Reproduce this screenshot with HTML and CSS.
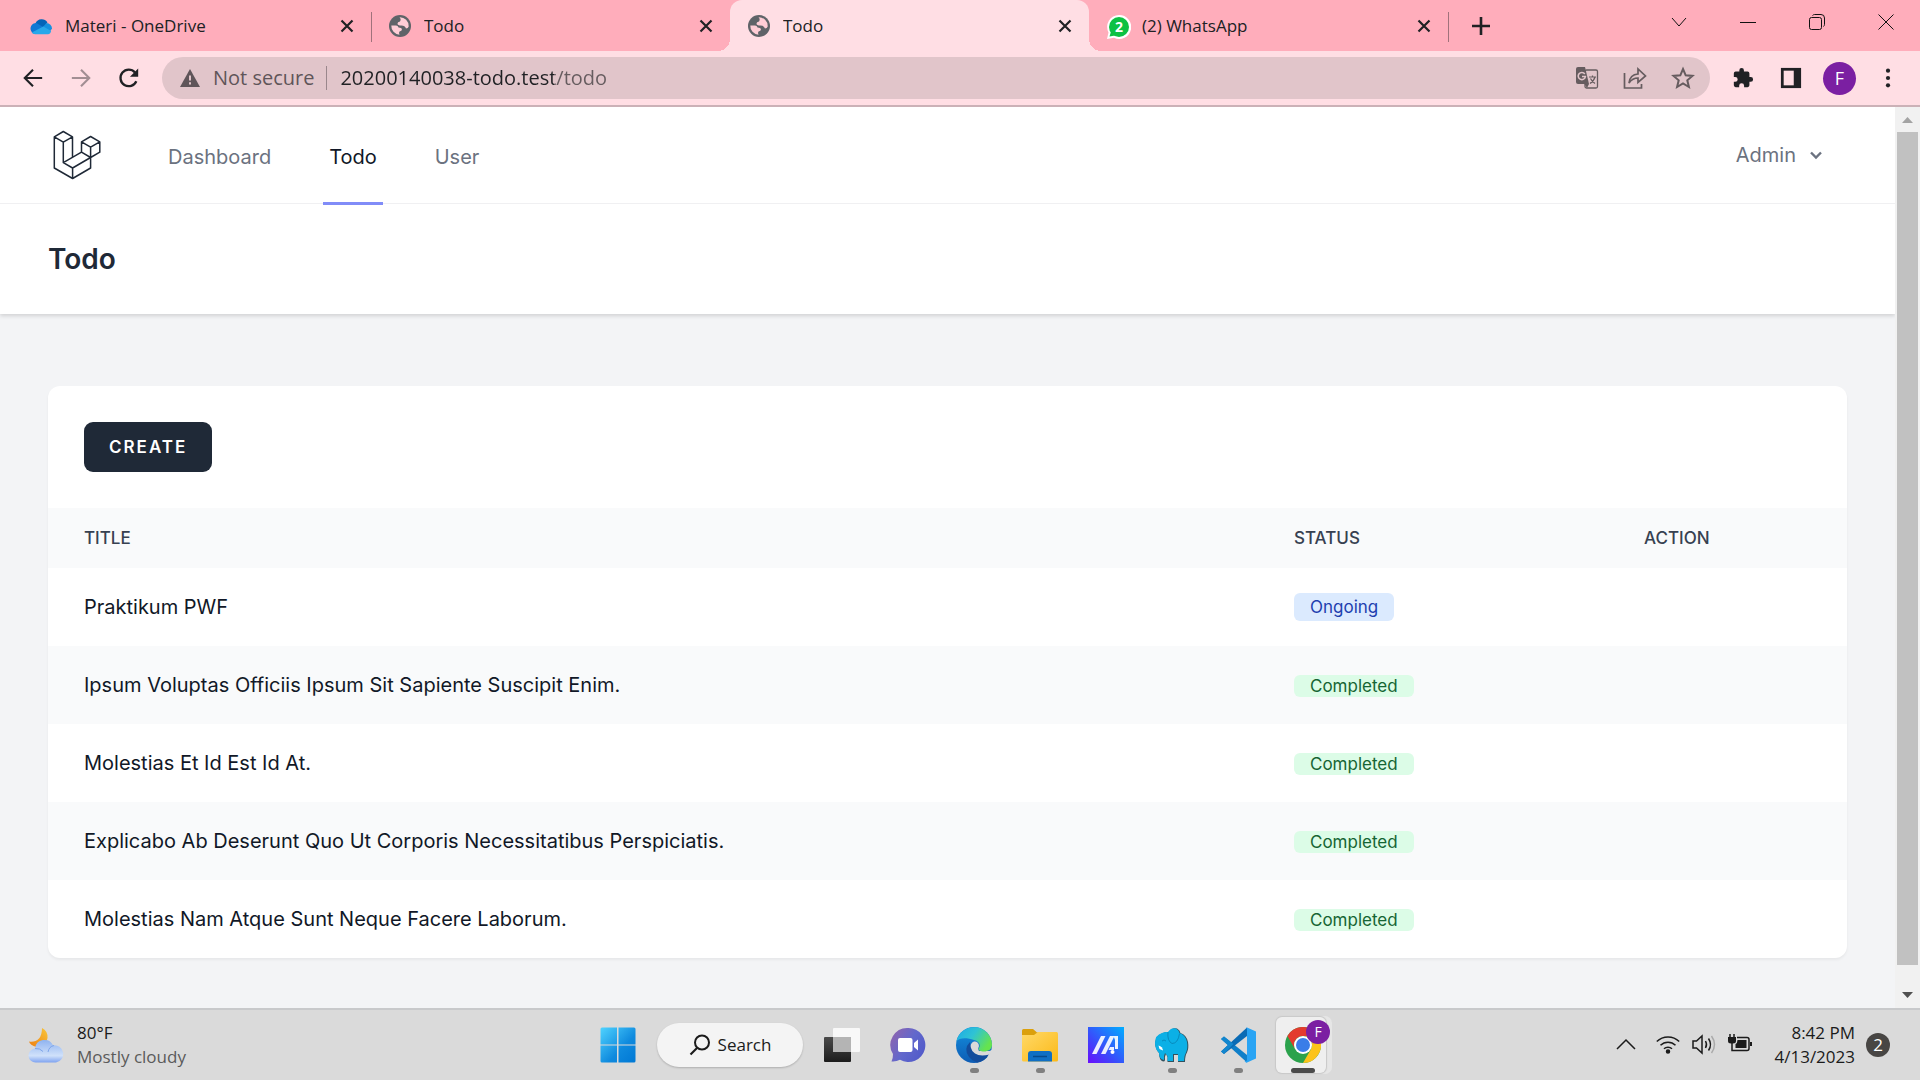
FILE: index.html
```html
<!DOCTYPE html>
<html lang="en">
<head>
<meta charset="utf-8">
<meta name="viewport" content="width=device-width, initial-scale=1">
<title>Todo</title>
<link rel="stylesheet" href="styles.css">
</head>
<body>
<svg class="defs" width="0" height="0" aria-hidden="true">
  <symbol id="globe" viewBox="0 0 22 22">
    <circle cx="11" cy="11" r="11" fill="#5f6368"/>
    <path d="M10.500 2.300A8.800 8.800 0 0 1 19.700 11.500Q19 13.500 17 13.500 16 10.500 12.500 10.500 8.500 10.500 8.500 8.500 8.500 7 11 6.500 12.500 4 10.500 2.300z" fill="#ffcdd6"/>
    <path d="M2.300 10.500H7Q9 10.500 9.500 12.500 12.500 12.500 13 14 13 16 10.500 16.500 9.500 18 10.500 19.700A8.800 8.800 0 0 1 2.300 10.500z" fill="#ffcdd6"/>
  </symbol>
  <symbol id="cross" viewBox="0 0 14 14"><path d="M1.500 1.500l11 11M12.500 1.500l-11 11" stroke="#202124" stroke-width="2.200"/></symbol>
</svg>

<header class="browser">
  <div class="tabstrip">
    <div class="tab">
      <svg class="favicon" viewBox="0 0 24 24"><path d="M6 9a7.500 7.500 0 0 1 13-1l-5 8-9-4z" fill="#0364b8"/><path d="M1 17a6 6 0 0 1 6-8.200l10 6-8 6H5a5 5 0 0 1-4-3.800z" fill="#0f78d4"/><path d="M14 13l4-4.200a6 6 0 0 1 6 6l-2 3z" fill="#1490df"/><path d="M2 19l12.500-6.500L23 17.500a4 4 0 0 1-3.500 3.500H5.500A5 5 0 0 1 2 19z" fill="#28a8ea"/></svg>
      <span class="tab-title">Materi - OneDrive</span>
      <button class="tab-close" aria-label="Close tab"><svg viewBox="0 0 14 14"><use href="#cross"/></svg></button>
    </div>
    <div class="tab divided">
      <svg class="favicon"><use href="#globe"/></svg>
      <span class="tab-title">Todo</span>
      <button class="tab-close" aria-label="Close tab"><svg viewBox="0 0 14 14"><use href="#cross"/></svg></button>
    </div>
    <div class="tab active">
      <svg class="favicon"><use href="#globe"/></svg>
      <span class="tab-title">Todo</span>
      <button class="tab-close" aria-label="Close tab"><svg viewBox="0 0 14 14"><use href="#cross"/></svg></button>
    </div>
    <div class="tab">
      <span class="favicon whatsapp"><svg viewBox="0 0 24 24"><path d="M12 0a12 12 0 1 1-5 22.800L0 24l1.500-6.500A12 12 0 0 1 12 0z" fill="#fff"/><circle cx="12" cy="12" r="10" fill="#0dc143"/><path d="M2.500 21.500l1.500-5 4 4z" fill="#0dc143"/></svg><b>2</b></span>
      <span class="tab-title">(2) WhatsApp</span>
      <button class="tab-close" aria-label="Close tab"><svg viewBox="0 0 14 14"><use href="#cross"/></svg></button>
    </div>
    <button class="new-tab divided" aria-label="New tab"><svg width="18" height="18" viewBox="0 0 18 18"><path d="M9 0v18M0 9h18" stroke="#202124" stroke-width="2.600"/></svg></button>
    <div class="window-controls">
      <button aria-label="Search tabs"><svg viewBox="0 0 16 16"><path d="M1 4l7 8 7-8"/></svg></button>
      <button aria-label="Minimize"><svg viewBox="0 0 16 16"><path d="M0 8.500h16"/></svg></button>
      <button aria-label="Restore"><svg viewBox="0 0 16 16"><rect x=".5" y="3.500" width="12" height="12" rx="2"/><path d="M3.500 1.500q1-1 2-1H12a3.500 3.500 0 0 1 3.500 3.500v6.500q0 1-1 2"/></svg></button>
      <button aria-label="Close"><svg viewBox="0 0 16 16"><path d="M.5.5l15 15M15.500.5l-15 15"/></svg></button>
    </div>
  </div>

  <div class="toolbar">
    <button class="tool" aria-label="Back"><svg viewBox="0 0 24 24" fill="none" stroke="#202124" stroke-width="2.300"><path d="M22 12H3.500M12 3l-9 9 9 9"/></svg></button>
    <button class="tool" aria-label="Forward"><svg viewBox="0 0 24 24" fill="none" stroke="#a28e93" stroke-width="2.300"><path d="M2 12h18.500M12 3l9 9-9 9"/></svg></button>
    <button class="tool" aria-label="Reload"><svg viewBox="0 0 24 24" fill="none" stroke="#202124" stroke-width="2.500"><path d="M20 15.500A9 9 0 1 1 18.500 6"/><path d="M22 1.500v9h-9z" fill="#202124" stroke="none"/></svg></button>
    <div class="omnibox">
      <svg class="warning" viewBox="0 0 20 18"><path d="M10 0l10 18H0z" fill="#5f5559"/><path d="M10 6.500v5M10 13.300v2.200" stroke="#e1c5ca" stroke-width="2"/></svg>
      <label class="security" for="address">Not secure</label>
      <input id="address" class="address" type="text" value="20200140038-todo.test/todo">
      <button class="omni-tool" aria-label="Translate"><svg viewBox="0 0 24 24"><rect x="10" y="4" width="12.500" height="18" rx="1.500" fill="none" stroke="#665c5f" stroke-width="1.300"/><path d="M3 1h7l4 17H3a2 2 0 0 1-2-2V3a2 2 0 0 1 2-2z" fill="#665c5f"/><path d="M9.500 18h4.500l-2 4z" fill="#665c5f"/><path d="M9.800 8A3.600 3.600 0 1 0 10.400 10.500H7" fill="none" stroke="#e1c5ca" stroke-width="1.600"/><path d="M14 11h7M17.500 9.500V11M20 11q-1 4-5 6.500M15.500 12.500q1.500 3 4.500 5" fill="none" stroke="#665c5f" stroke-width="1.200"/></svg></button>
      <button class="omni-tool" aria-label="Share"><svg viewBox="0 0 24 24" fill="none" stroke="#665c5f" stroke-width="1.700"><path d="M1.500 7v15h17v-4"/><path d="M6 17q1-8.500 9-9V3l7.500 7-7.500 6.500V12q-5.500 0-9 5z"/></svg></button>
      <button class="omni-tool" aria-label="Bookmark this tab"><svg viewBox="0 0 24 24" fill="none" stroke="#665c5f" stroke-width="2"><path d="M12 3l2.700 6.300 6.800.6-5.200 4.400 1.600 6.700L12 17.400 6.100 21l1.600-6.700L2.500 9.900l6.800-.6z"/></svg></button>
    </div>
    <button class="tool" aria-label="Extensions"><svg viewBox="0 0 24 24" fill="#202124"><path d="M20.500 11H19V7a2 2 0 0 0-2-2h-4V3.500a2.500 2.500 0 0 0-5 0V5H4a2 2 0 0 0-2 2v3.800h1.500a2.700 2.700 0 0 1 0 5.400H2V20a2 2 0 0 0 2 2h3.800v-1.500a2.700 2.700 0 0 1 5.400 0V22H17a2 2 0 0 0 2-2v-4h1.500a2.500 2.500 0 0 0 0-5z"/></svg></button>
    <button class="tool" aria-label="Side panel"><svg viewBox="0 0 24 24"><path d="M1 1h22v22H1z" fill="#202124"/><path d="M4 4h11v16H4z" fill="#ffdee4"/></svg></button>
    <button class="tool profile" aria-label="Profile">F</button>
    <button class="tool" aria-label="Menu"><svg viewBox="0 0 24 24" fill="#202124"><circle cx="12" cy="4" r="2.300"/><circle cx="12" cy="12" r="2.300"/><circle cx="12" cy="20" r="2.300"/></svg></button>
  </div>
</header>

<div class="viewport">
  <div class="app">
    <nav class="nav">
      <a class="logo" href="#" aria-label="Home"><svg width="48" height="50" viewBox="0 0 48 50" fill="none" stroke="#1f2937" stroke-width="1.500" stroke-linejoin="round"><path d="M10.300 1.500l9.200 5.300-9.200 5.300-9-5.300zM1.300 6.800V38l18.300 10.500L37.600 38V27.500M10.300 12.100v20.500l9.300 5.400v10.500M19.600 38l18-10.500M10.300 32.600l18.200-10.500 9.100 5.400M19.500 6.800v20.500M37.600 6.500l9.200 5.300-9.200 5.300-9.100-5.300zM28.500 11.800v10.300M37.600 17.100v10.400l9.200-5.300V11.800"/></svg></a>
      <a class="nav-link" href="#">Dashboard</a>
      <a class="nav-link current" href="#">Todo</a>
      <a class="nav-link" href="#">User</a>
      <button class="user-menu">Admin <svg width="14" height="9" viewBox="0 0 14 9"><path d="M2 1.500l5 5 5-5" fill="none" stroke="#6b7280" stroke-width="2.400"/></svg></button>
    </nav>
    <header class="page-header"><h1>Todo</h1></header>
    <main class="content">
      <section class="card">
        <div class="card-top"><button class="create">CREATE</button></div>
        <table class="todos">
          <thead><tr><th class="col-title">TITLE</th><th class="col-status">STATUS</th><th class="col-action">ACTION</th></tr></thead>
          <tbody>
            <tr><td>Praktikum PWF</td><td><span class="badge ongoing">Ongoing</span></td><td></td></tr>
            <tr><td>Ipsum Voluptas Officiis Ipsum Sit Sapiente Suscipit Enim.</td><td><span class="badge completed">Completed</span></td><td></td></tr>
            <tr><td>Molestias Et Id Est Id At.</td><td><span class="badge completed">Completed</span></td><td></td></tr>
            <tr><td>Explicabo Ab Deserunt Quo Ut Corporis Necessitatibus Perspiciatis.</td><td><span class="badge completed">Completed</span></td><td></td></tr>
            <tr><td>Molestias Nam Atque Sunt Neque Facere Laborum.</td><td><span class="badge completed">Completed</span></td><td></td></tr>
          </tbody>
        </table>
      </section>
    </main>
  </div>
  <div class="scrollbar" aria-hidden="true">
    <svg width="11" height="6" viewBox="0 0 11 6"><path d="M0 6l5.500-6L11 6z" fill="#a3a3a3"/></svg>
    <div class="thumb"></div>
    <svg width="11" height="6" viewBox="0 0 11 6"><path d="M0 0l5.500 6L11 0z" fill="#505050"/></svg>
  </div>
</div>

<footer class="taskbar">
  <div class="weather">
    <svg width="36" height="36" viewBox="0 0 36 36">
      <defs><linearGradient id="moon" x1="1" y1="0" x2="0" y2="1"><stop offset="0" stop-color="#f8c63a"/><stop offset="1" stop-color="#ee7f12"/></linearGradient>
      <linearGradient id="cloud" x1="0" y1="0" x2="0" y2="1"><stop offset="0" stop-color="#8fb3f0"/><stop offset=".7" stop-color="#d0e1fa"/><stop offset="1" stop-color="#7fa3f0"/></linearGradient></defs>
      <path d="M14 1q6 3 5.500 10-1 8-11 9Q2 18 1 14.500q6 1 10-3Q14 8 14 1z" fill="url(#moon)"/>
      <path d="M8 35.500a7 7 0 0 1-1-14 9.500 9.500 0 0 1 18-3.200 8.600 8.600 0 0 1 3 17.200z" fill="url(#cloud)"/>
      <path d="M15 24.500q-3-3.500-8-3M20 25q1-5.500 6-6.500" stroke="#7ea5ea" fill="none"/>
    </svg>
    <p><span>80°F</span><span class="muted">Mostly cloudy</span></p>
  </div>

  <div class="apps">
    <button class="app-btn" aria-label="Start"><svg viewBox="0 0 36 36"><defs><linearGradient id="win" x1="0" y1="0" x2="1" y2="1"><stop offset="0" stop-color="#4fd3ff"/><stop offset=".6" stop-color="#0f8ade"/><stop offset="1" stop-color="#0078d4"/></linearGradient></defs><path d="M2 .5h15v17H.5V2A1.500 1.500 0 0 1 2 .5zM18.500.5H34A1.500 1.500 0 0 1 35.500 2v15.500h-17zM.5 18.500H17v17H2A1.500 1.500 0 0 1 .5 34zM18.500 18.500h17V34a1.500 1.500 0 0 1-1.500 1.500H18.500z" fill="url(#win)"/></svg></button>
    <button class="search"><svg width="22" height="22" viewBox="0 0 22 22"><circle cx="13" cy="8.500" r="7" fill="none" stroke="#1b1b1b" stroke-width="2"/><path d="M8 14l-6.500 6.500" stroke="#1b1b1b" stroke-width="2.200"/></svg>Search</button>
    <button class="app-btn" aria-label="Task view"><svg viewBox="0 0 36 36"><defs><linearGradient id="tvd" x1="0" y1="0" x2="0" y2="1"><stop offset="0" stop-color="#4a4a4a"/><stop offset="1" stop-color="#1c1c1c"/></linearGradient></defs><rect x="0" y="10" width="27" height="25" rx="1" fill="url(#tvd)"/><rect x="9" y="1" width="27" height="24" rx="1" fill="#fff" opacity=".8"/><path d="M9 10h18v15H9z" fill="#b4b4b4"/></svg></button>
    <button class="app-btn" aria-label="Chat"><svg viewBox="0 0 36 36"><defs><linearGradient id="chat" x1="0" y1=".2" x2="1" y2=".8"><stop offset="0" stop-color="#8d64b0"/><stop offset=".5" stop-color="#6268cc"/><stop offset="1" stop-color="#5059c9"/></linearGradient></defs><path d="M18.500 1a17 17 0 1 1-8.500 31.800Q6 35 1.500 34.500 3 32 3 27A17 17 0 0 1 18.500 1z" fill="url(#chat)"/><rect x="8" y="11" width="14.500" height="14" rx="2" fill="#fff"/><path d="M24 16l4-3.500v11L24 20z" fill="#fff"/></svg></button>
    <button class="app-btn running" aria-label="Edge"><svg viewBox="0 0 36 36"><defs><linearGradient id="eg" x1="0" y1="0" x2="1" y2=".5"><stop offset="0" stop-color="#1ca9e8"/><stop offset=".5" stop-color="#2fc3d4"/><stop offset="1" stop-color="#65e34f"/></linearGradient><linearGradient id="eb" x1="0" y1="0" x2="0" y2="1"><stop offset="0" stop-color="#1490df"/><stop offset="1" stop-color="#0d5cb4"/></linearGradient></defs><circle cx="18" cy="18" r="18" fill="url(#eb)"/><path d="M22 24h14v5l-4 1z" fill="#dadada"/><path d="M.5 14A18 18 0 0 1 36 17.500c0 5-4 7-8 7-5 0-6-2-5-3.500 2-3 0-7-5-8C10 10 3 11 .5 14z" fill="url(#eg)"/><path d="M14 15q-7 7-1 15 3 4 8 5.500 8-1 12.500-9Q26 30 19 25q-5-4-5-10z" fill="#124c9c"/><path d="M15 21a6 5.500 0 0 1 3-6.500c3.500-.5 6 3 4.500 6-1.500 4 3 5.500 8 4.500l5.500-2 .5 3-3 1.500Q24 30 19 26.500q-3.500-2.500-4-5.500z" fill="#dadada"/></svg></button>
    <button class="app-btn running" aria-label="File Explorer"><svg viewBox="0 0 36 36"><defs><linearGradient id="fy" x1="0" y1="0" x2="1" y2="1"><stop offset="0" stop-color="#ffd968"/><stop offset="1" stop-color="#fbb917"/></linearGradient></defs><path d="M0 3.500Q0 2 1.500 2H11l4 3.500h19.500V15H0z" fill="#dba00c"/><path d="M0 8h12l4-3h18.500Q36 5 36 7v26q0 1.500-1.500 1.500h-33Q0 34.500 0 33z" fill="url(#fy)"/><path d="M6 34.500V27q0-3 3-3h18q3 0 3 3v7.500z" fill="#0f6fc4"/><path d="M11 29.500h14" stroke="#064a8c" stroke-width="1.500"/></svg></button>
    <button class="app-btn" aria-label="MyASUS"><svg viewBox="0 0 36 36"><defs><linearGradient id="asus" x1="0" y1="1" x2="1" y2="0"><stop offset="0" stop-color="#6a0dfc"/><stop offset=".4" stop-color="#3a4bfb"/><stop offset="1" stop-color="#00aeff"/></linearGradient></defs><path d="M0 0h36v36H0z" fill="url(#asus)"/><path d="M13 9h4.500L8.500 27H4zM22 9h4.500l-9 18H13zM25.500 9H30v13h-3v-9z M22 20h4v3h-5.500z" fill="#fff" opacity=".9"/><circle cx="24.500" cy="25" r="2" fill="#fff"/></svg></button>
    <button class="app-btn running" aria-label="Laragon"><svg viewBox="0 0 36 36"><g id="elephant"><path d="M9 6q3-1.500 6-1Q18 0 23 1.500q3 1.500 3.500 4.500 6 2 7.500 9 1 6-1 10.500-2 3-2 9.500h-7v-7h-4v7h-6.500v-5L12 27q-1.500 2.500-1 6 0 1.500-2 1.500Q5 33 5 26 1.500 22 1 16 2 8 9 6z" fill="#33525e"/></g><path d="M8 6q3-1.500 6-1Q17 0 22 1.500q3 1.500 3.500 4.500 6 2 7.500 9 1 6-1 10.500-2 3-2 8.500h-6v-7h-5v7h-5.500v-5L11 26q-1.500 2.500-1 7-5-1-5-7-4-4-4-10Q1 8 8 6z" fill="#0bb0e6"/><path d="M14 5q-1 9 4 11.500 6 0 7.500-10M8 14q2-2 4 0" fill="none" stroke="#078bbd"/><path d="M4.500 18.500q4 1 4.500 5l-3.500-1.500z" fill="#fff"/></svg></button>
    <button class="app-btn running" aria-label="Visual Studio Code"><svg viewBox="0 0 36 36"><path d="M1 12l3-2.500 23 18.500v7.500z" fill="#0f7fc9"/><path d="M1 24.500L4 27 27 9V.5z" fill="#0a6bb5"/><path d="M26.500.2L36 4.500v27l-9.500 4.300-2-1.300 2.500-1V2.500z" fill="#29a4f4"/><path d="M1 12l3-2.500 9.500 7.500L4 27l-3-2.500L8 18z" fill="#1286ce"/></svg></button>
    <button class="app-btn chrome running" aria-label="Google Chrome"><svg viewBox="0 0 36 36"><circle cx="18" cy="18" r="18" fill="#2ba24c"/><path d="M2.400 9A18 18 0 0 1 33.600 9H18a9 9 0 0 0-7.800 13.500z" fill="#e33b2e"/><path d="M33.600 9A18 18 0 0 1 18 36l7.800-13.500A9 9 0 0 0 18 9z" fill="#fcc31a"/><circle cx="18" cy="18" r="9" fill="#fff"/><circle cx="18" cy="18" r="7" fill="#3a7de8"/></svg><span class="chrome-badge">F</span></button>
  </div>

  <div class="tray">
    <button class="tray-btn" aria-label="Show hidden icons"><svg viewBox="0 0 24 24"><path d="M3 16l9-9 9 9"/></svg></button>
    <div class="tray-group">
      <svg viewBox="0 0 24 24"><path d="M.8 8.500a16 16 0 0 1 22.400 0M4.500 12.300a10.500 10.500 0 0 1 15 0M8 15.800a5.700 5.700 0 0 1 8 0" /><circle cx="12" cy="18.500" r="1.500" fill="#1b1b1b"/></svg>
      <svg viewBox="0 0 24 24"><path d="M1 8h3.500L10 3v17l-5.500-5H1zM13.500 8q2 3.500 0 7M16.500 5.500q4 6 0 12"/><path d="M19.500 3q6 8.500 0 17" stroke="#aaa"/></svg>
      <svg viewBox="0 0 24 24"><path d="M9 4.500h10q2 0 2 2v9q0 2-2 2H7"/><path d="M9 7h9.500v8H7.500v-4q2-1 2-4zM22 9h2v4h-2zM0 4h8v4q0 2.500-3 2.500H3Q0 10.500 0 8z" fill="#1b1b1b" stroke="none"/><path d="M2 1V5M6 1V5M4 10v7.500h3"/></svg>
    </div>
    <p class="clock"><time>8:42 PM</time><time>4/13/2023</time></p>
    <span class="count">2</span>
  </div>
</footer>
</body>
</html>
```
FILE: styles.css
```css
* { box-sizing: border-box; }

body {
  margin: 0;
  min-height: 100vh;
  display: flex;
  flex-direction: column;
  background: #f3f4f6;
  color: #111827;
  font: 20px/24px Inter, "Noto Sans", sans-serif;
}

button, input { font: inherit; color: inherit; border: 0; background: none; padding: 0; }
button { display: flex; align-items: center; justify-content: center; }
a { color: inherit; text-decoration: none; }
p, h1 { margin: 0; }
svg { display: block; flex: none; }
.defs { position: absolute; }

/* Browser window */
.browser, .taskbar { font-family: "Open Sans", "Noto Sans", sans-serif; }
.browser { border-bottom: 2px solid #cbb1b7; background: #ffdee4; color: #202124; }

.tabstrip { display: flex; height: 51px; padding-left: 12px; background: #ffadbb; font-size: 17px; }
.tab { display: flex; align-items: center; gap: 13px; flex: 0 1 359px; min-width: 0; padding: 0 17px 0 18px; }
.favicon { width: 22px; height: 22px; }
.tab-title { flex: 1; min-width: 0; overflow: hidden; white-space: nowrap; }
.tab-close svg { width: 14px; height: 14px; }
.divided { background: linear-gradient(#a0727b, #a0727b) 0 12px / 1px 30px no-repeat; }

.tab.active { position: relative; background: #ffdee4; border-radius: 12px 12px 0 0; }
.tab.active::before, .tab.active::after { content: ""; position: absolute; bottom: 0; width: 12px; height: 12px; }
.tab.active::before { left: -12px; background: radial-gradient(circle at 0 0, transparent 12px, #ffdee4 12px); }
.tab.active::after { right: -12px; background: radial-gradient(circle at 100% 0, transparent 12px, #ffdee4 12px); }

.whatsapp { display: grid; place-items: center; }
.whatsapp > * { grid-area: 1 / 1; }
.whatsapp svg { width: 24px; height: 24px; }
.whatsapp b { color: #fff; font-size: 14px; line-height: 20px; }

.new-tab { width: 65px; }
.window-controls { display: flex; margin-left: auto; height: 43px; }
.window-controls button { width: 69px; }
.window-controls svg { width: 16px; height: 16px; fill: none; stroke: #111; stroke-width: 1; }

.toolbar { display: flex; align-items: center; gap: 24px; height: 54px; padding: 0 20px 0 21px; }
.tool { width: 24px; height: 24px; flex: none; }
.tool svg { width: 22px; height: 22px; }
.profile { width: 33px; height: 33px; margin: 0 -4px; border-radius: 50%; background: #7b1fa2; color: #fff; font-size: 18px; }

.omnibox { display: flex; align-items: center; flex: 1; min-width: 0; height: 42px; margin: 0 -3px; padding: 0 15px 0 18px; border-radius: 21px; background: #e1c5ca; font-size: 20px; }
.warning { width: 20px; height: 18px; margin-right: 13px; }
.security { flex: none; color: #5f5559; padding-right: 12px; border-right: 1px solid #9a878c; }
.address {
  flex: 1;
  min-width: 0;
  margin-left: 13px;
  color: transparent;
  background: linear-gradient(to right, #202124 214px, #665c5f 214px);
  -webkit-background-clip: text;
  background-clip: text;
}
.omni-tool { width: 24px; height: 24px; flex: none; margin-left: 24px; }
.omni-tool svg { width: 24px; height: 24px; }

/* Page */
.viewport { flex: 1; display: flex; }
.app { flex: 1; min-width: 0; }

.nav { position: relative; z-index: 1; display: flex; align-items: stretch; height: 97px; padding: 0 72px 0 53px; background: #fff; border-bottom: 1px solid #f0f0f2; color: #6b7280; }
.logo { display: flex; align-items: center; margin-right: 61px; }
.nav-link { display: flex; align-items: center; height: 98px; padding: 5px 6px 0; margin-right: 46px; border-bottom: 3px solid transparent; }
.nav-link.current { color: #111827; border-color: #818cf8; }
.user-menu { gap: 13px; margin-left: auto; }

.page-header { position: relative; padding: 37px 48px; background: #fff; box-shadow: 0 2px 4px rgba(0, 0, 0, .14); }
.page-header h1 { color: #1f2937; font-size: 28px; line-height: 36px; font-weight: 600; }

.content { padding: 72px 48px 50px; }
.card { overflow: hidden; border-radius: 12px; background: #fff; box-shadow: 0 2px 3px rgba(0, 0, 0, .05); }
.card-top { padding: 36px; }
.create { height: 50px; padding: 0 25px; border-radius: 9px; background: #1f2937; color: #fff; font-size: 17px; font-weight: 600; letter-spacing: 2px; }

.todos { width: 100%; border-collapse: collapse; table-layout: fixed; text-align: left; }
.todos th { height: 60px; padding: 0 36px; color: #374151; font-size: 17px; font-weight: 500; }
.todos td { height: 78px; padding: 0 36px; }
.todos thead, .todos tbody tr:nth-child(even) { background: #f9fafb; }
.col-status { width: 350px; }
.col-action { width: 239px; }

.badge { display: inline-block; padding: 0 16px; border-radius: 6px; font-size: 17px; line-height: 22px; vertical-align: middle; }
.ongoing { padding-block: 3px; background: #dbeafe; color: #1e40af; }
.completed { background: #dcfce7; color: #166534; }

.scrollbar { position: relative; display: flex; flex-direction: column; align-items: center; width: 25px; padding: 10px 2px; gap: 9px; background: #f1f1f1; }
.thumb { flex: 1; width: 21px; margin-bottom: 18px; background: #c1c1c1; }

/* Taskbar */
.taskbar { display: grid; grid-template-columns: 1fr auto 1fr; align-items: center; height: 72px; padding: 0 30px 0 28px; border-top: 2px solid #c8c9cb; background: #dadada; color: #1b1b1b; font-size: 17px; }
.weather { display: flex; align-items: center; gap: 13px; }
.weather span { display: block; }
.muted { color: #5b5b5b; }

.apps { display: flex; align-items: center; gap: 30px; padding-left: 8px; }
.app-btn { position: relative; width: 36px; height: 56px; }
.app-btn svg { width: 36px; height: 36px; }
.running::after { content: ""; position: absolute; bottom: 0; left: 14px; width: 9px; height: 5px; border-radius: 3px; background: #808080; }
.search { gap: 7px; width: 146px; height: 44px; margin: 0 -9px; border-radius: 22px; background: #f4f4f4; box-shadow: 0 1px 2px rgba(0, 0, 0, .2); }
.chrome { width: 50px; margin: 0 0 0 -10px; padding-left: 3px; border-radius: 6px; background: #efefef; box-shadow: 0 0 1px 1px #c8c8c8, 5px 0 0 1px #e6e6e6; }
.chrome::after { width: 24px; background: #4b4b4b; left: 15px; }
.chrome-badge { position: absolute; top: 3px; right: -4px; width: 24px; height: 24px; border-radius: 50%; background: #7b1fa2; color: #fff; font-size: 14px; }

.tray { display: flex; align-items: center; justify-content: flex-end; }
.tray-btn, .tray svg { width: 24px; height: 24px; }
.tray svg { fill: none; stroke: #1b1b1b; stroke-width: 1.5; }
.tray-group { display: flex; gap: 12px; margin: 0 22px 0 18px; }
.clock { text-align: right; }
.clock time { display: block; }
.count { display: grid; place-items: center; width: 24px; height: 24px; margin-left: 11px; border-radius: 50%; background: #484644; color: #fff; }
```
